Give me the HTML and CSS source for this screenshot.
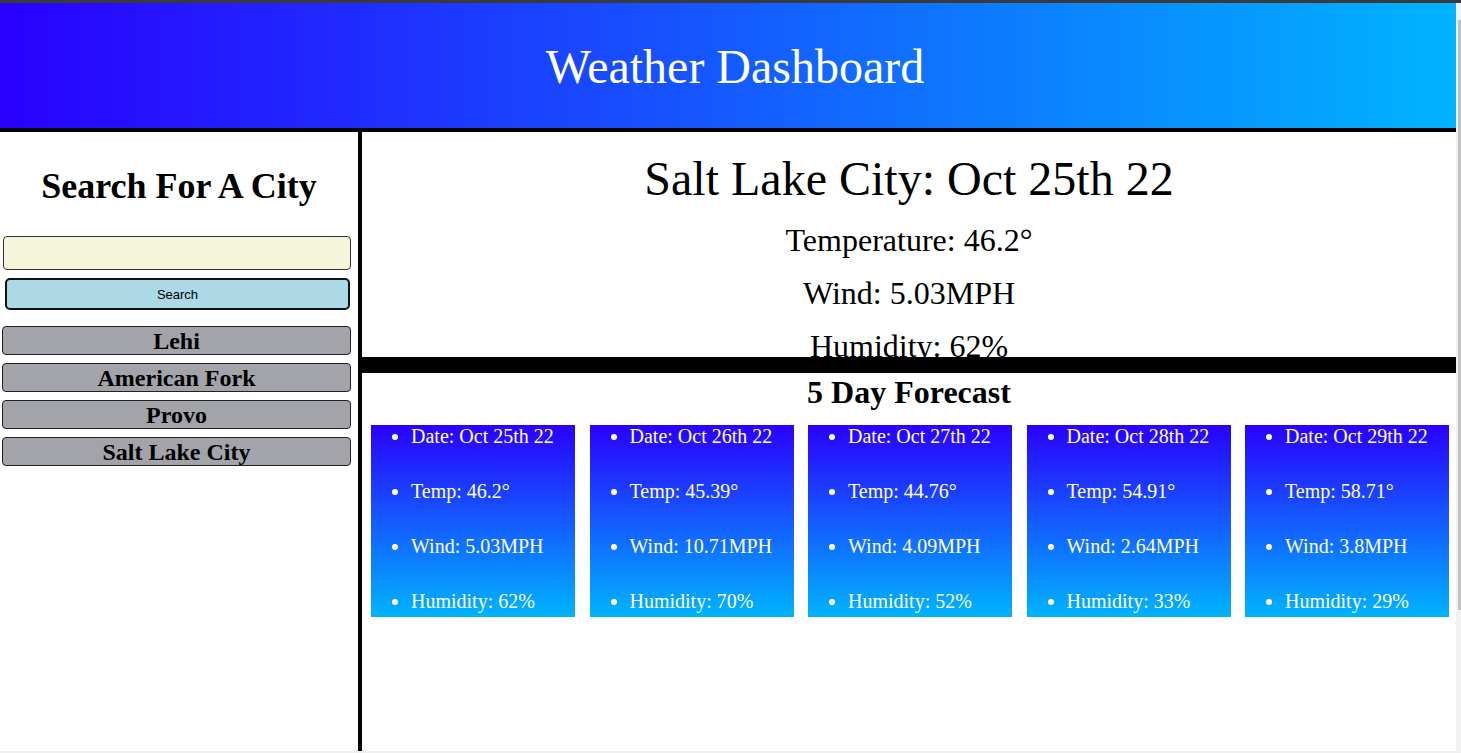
FILE: index.html
```html
<!DOCTYPE html>
<html lang="en">
<head>
<meta charset="utf-8">
<title>Weather Dashboard</title>
<link rel="stylesheet" href="styles.css">
</head>
<body>
<div class="topbar"></div>
<div class="viewport">
  <div class="page">
    <header class="header">
      <h1 class="title">Weather Dashboard</h1>
    </header>
    <div class="layout">
      <aside class="sidebar">
        <h2 class="side-title">Search For A City</h2>
        <input class="city-input" type="text">
        <button class="search-btn">Search</button>
        <div class="history">
          <button class="city-btn">Lehi</button>
          <button class="city-btn">American Fork</button>
          <button class="city-btn">Provo</button>
          <button class="city-btn">Salt Lake City</button>
        </div>
      </aside>
      <main class="main">
        <section class="current">
          <h2 class="current-title">Salt Lake City: Oct 25th 22</h2>
          <p class="current-line">Temperature: 46.2°</p>
          <p class="current-line">Wind: 5.03MPH</p>
          <p class="current-line">Humidity: 62%</p>
        </section>
        <section class="forecast">
          <h2 class="forecast-title">5 Day Forecast</h2>
          <div class="cards">
            <ul class="card">
              <li>Date: Oct 25th 22</li>
              <li>Temp: 46.2°</li>
              <li>Wind: 5.03MPH</li>
              <li>Humidity: 62%</li>
            </ul>
            <ul class="card">
              <li>Date: Oct 26th 22</li>
              <li>Temp: 45.39°</li>
              <li>Wind: 10.71MPH</li>
              <li>Humidity: 70%</li>
            </ul>
            <ul class="card">
              <li>Date: Oct 27th 22</li>
              <li>Temp: 44.76°</li>
              <li>Wind: 4.09MPH</li>
              <li>Humidity: 52%</li>
            </ul>
            <ul class="card">
              <li>Date: Oct 28th 22</li>
              <li>Temp: 54.91°</li>
              <li>Wind: 2.64MPH</li>
              <li>Humidity: 33%</li>
            </ul>
            <ul class="card">
              <li>Date: Oct 29th 22</li>
              <li>Temp: 58.71°</li>
              <li>Wind: 3.8MPH</li>
              <li>Humidity: 29%</li>
            </ul>
          </div>
        </section>
      </main>
    </div>
  </div>
  <div class="scrollbar"><div class="thumb"></div></div>
</div>
<div class="bottombar"></div>
</body>
</html>
```
FILE: styles.css
```css
html, body {
  margin: 0;
  padding: 0;
  height: 753px;
  overflow: hidden;
  background: #ffffff;
  font-family: "Liberation Serif", "Times New Roman", serif;
  color: #000;
}

.topbar {
  height: 3px;
  background: #3a3a3a;
}

.viewport {
  display: flex;
  height: 748px;
}

.page {
  width: 1456px;
  display: flex;
  flex-direction: column;
}

.scrollbar {
  width: 5px;
  background: #f1f1f1;
  padding-top: 17px;
  padding-left: 2px;
  box-sizing: border-box;
}

.thumb {
  height: 590px;
  background: #c1c1c1;
}

.bottombar {
  height: 2px;
  background: #efefef;
}

.header {
  box-sizing: border-box;
  height: 129px;
  padding-top: 36px;
  background: linear-gradient(to right, #2a00ff, #00b4ff);
  border-bottom: 4px solid #000;
}

.title {
  margin: 0;
  text-align: center;
  font-weight: normal;
  font-size: 48px;
  line-height: 55px;
  color: #fff;
  padding-left: 14px;
}

.layout {
  flex: 1;
  display: flex;
}

.sidebar {
  width: 358px;
  flex: none;
}

.side-title {
  margin: 34px 0 0;
  text-align: center;
  font-size: 36px;
  line-height: 41px;
  font-weight: bold;
}

.city-input {
  display: block;
  box-sizing: border-box;
  width: 348px;
  height: 34px;
  margin: 29px 0 0 3px;
  background: #f5f5dc;
  border: 1px solid #333;
  border-radius: 4px;
}

.search-btn {
  display: block;
  box-sizing: border-box;
  width: 345px;
  height: 32px;
  margin: 8px 0 0 5px;
  background: #add8e6;
  border: 2px solid #111;
  border-radius: 5px;
  font-family: "Liberation Sans", Arial, sans-serif;
  font-size: 13px;
  color: #000;
}

.history {
  display: flex;
  flex-direction: column;
  gap: 8px;
  margin: 16px 0 0 2px;
}

.city-btn {
  box-sizing: border-box;
  width: 349px;
  height: 29px;
  padding: 0;
  background: #a2a4aa;
  border: 1px solid #222;
  border-radius: 4px;
  font-family: "Liberation Serif", "Times New Roman", serif;
  font-weight: bold;
  font-size: 24px;
  line-height: 26px;
  color: #000;
}

.main {
  flex: 1;
  border-left: 4px solid #000;
  min-width: 0;
}

.current {
  box-sizing: border-box;
  height: 241px;
  overflow: hidden;
  border-bottom: 16px solid #000;
  padding-top: 19px;
  text-align: center;
}

.current-title {
  margin: 0 0 16px;
  font-weight: normal;
  font-size: 48px;
  line-height: 55px;
}

.current-line {
  margin: 0 0 16px;
  font-size: 32px;
  line-height: 37px;
}

.forecast-title {
  margin: 1px 0 0;
  text-align: center;
  font-size: 32px;
  line-height: 37px;
}

.cards {
  display: flex;
  gap: 14.5px;
  padding: 14px 0 0 9px;
}

.card {
  width: 204px;
  height: 192px;
  box-sizing: border-box;
  margin: 0;
  padding: 0 0 0 40px;
  background: linear-gradient(to bottom, #2a00ff, #00b4ff);
  color: #fff;
  font-size: 20px;
  line-height: 23px;
}

.card li + li {
  margin-top: 32px;
}
```
